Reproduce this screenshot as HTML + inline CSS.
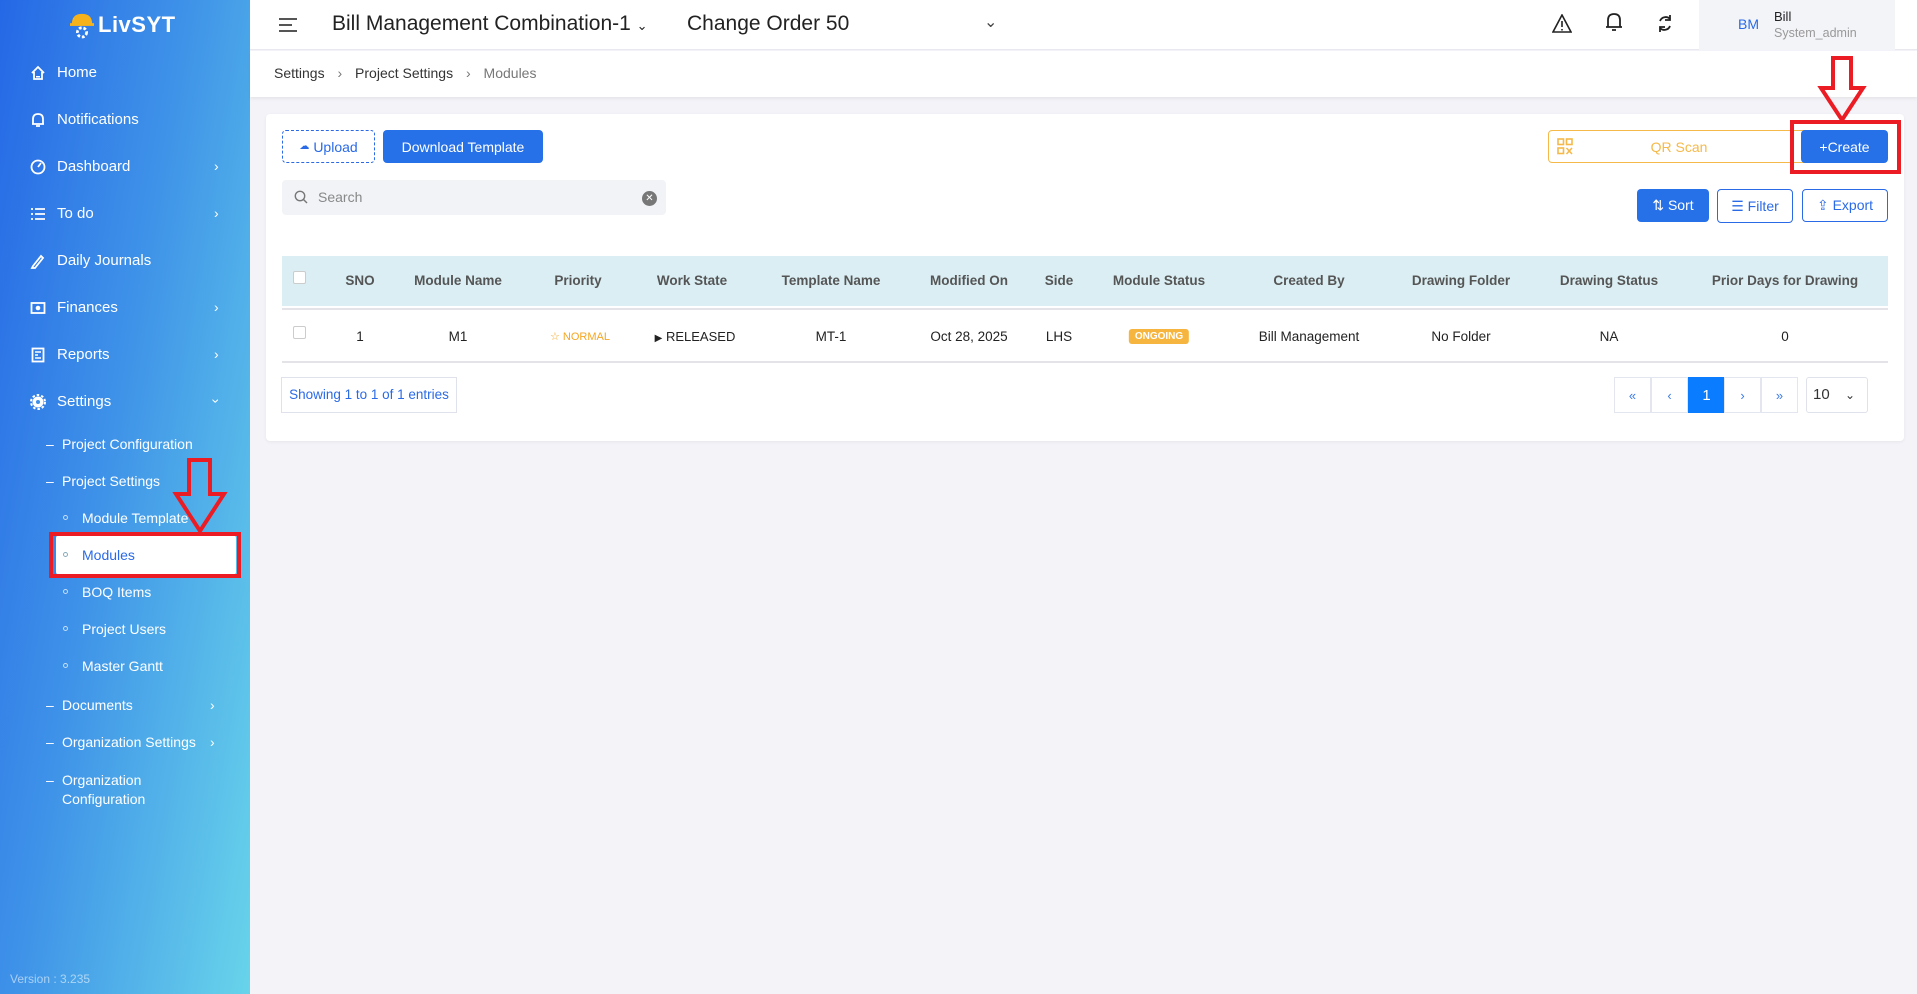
<!DOCTYPE html>
<html><head><meta charset="utf-8">
<style>
*{box-sizing:border-box;margin:0;padding:0}
body{width:1917px;height:994px;overflow:hidden;font-family:"Liberation Sans",sans-serif;background:#f3f3f8;position:relative;color:#333}
.abs{position:absolute}
#side{left:0;top:0;width:250px;height:994px;background:linear-gradient(100deg,#2568e6 0%,#3f93e8 45%,#68d4ea 100%)}
.nav{position:absolute;left:0;color:#fff;font-size:15px;width:250px;height:20px}
.nav svg{position:absolute;left:30px;top:1px}
.nav span{position:absolute;left:57px;top:0}
.nav .chev{position:absolute;left:214px;font-size:14px}
.sub{position:absolute;color:#fff;font-size:14px}
.sub .d{position:absolute;left:-16px;top:0}
.sub .o{position:absolute;left:-19px;top:5px;width:5px;height:5px;border:1px solid rgba(255,255,255,.7);border-radius:50%}
#hdr{left:250px;top:0;width:1667px;height:50px;background:#fff;border-bottom:1px solid #e8e8ee}
#bc{left:250px;top:51px;width:1667px;height:46px;background:#fff;box-shadow:0 2px 3px rgba(0,0,0,.06)}
#card{left:266px;top:114px;width:1638px;height:327px;background:#fff;border-radius:4px;box-shadow:0 1px 3px rgba(0,0,0,.06)}
.btn{position:absolute;border-radius:4px;font-size:14px;display:flex;align-items:center;justify-content:center}
.th,.td{position:absolute;font-size:13.5px;transform:translateX(-50%);white-space:nowrap}
.th{top:273px;font-weight:bold;color:#555}
.td{top:329px;color:#222}
.pg{position:absolute;top:377px;width:37px;height:36px;border:1px solid #e3e6ee;display:flex;align-items:center;justify-content:center;color:#3a7ae8;font-size:13px;background:#fff}
.red{position:absolute;border:4px solid #ec1c24}
</style></head><body>
<div id="side" class="abs"></div>
<svg class="abs" style="left:70px;top:11px" width="24" height="28" viewBox="0 0 26 30"><path d="M2 14 Q2 3 13 3 Q24 3 24 14 Z" fill="#f6b21a"/><rect x="0" y="13" width="26" height="3" fill="#f6b21a"/><circle cx="13" cy="23" r="5" fill="none" stroke="#fff" stroke-width="3" stroke-dasharray="3 2"/></svg>
<div class="abs" style="left:98px;top:12px;color:#fff;font-size:22px;font-weight:bold;letter-spacing:0.5px">LivSYT</div>

<div class="nav" style="top:64px"><svg width="16" height="16" viewBox="0 0 16 16"><path d="M2 8 L8 2 L14 8 M4 7 V14 H12 V7" fill="none" stroke="#fff" stroke-width="1.8"/><rect x="6" y="11" width="4" height="1.5" fill="#fff"/></svg><span>Home</span></div>
<div class="nav" style="top:111px"><svg width="16" height="17" viewBox="0 0 16 17"><path d="M3 12 V7 Q3 2 8 2 Q13 2 13 7 V12 H2 H14 M6 14 H10" fill="none" stroke="#fff" stroke-width="1.8"/></svg><span>Notifications</span></div>
<div class="nav" style="top:158px"><svg width="16" height="16" viewBox="0 0 16 16"><circle cx="8" cy="8" r="6.5" fill="none" stroke="#fff" stroke-width="1.8"/><path d="M8 8 L11 4" stroke="#fff" stroke-width="1.8"/></svg><span>Dashboard</span><span class="chev">›</span></div>
<div class="nav" style="top:205px"><svg width="16" height="16" viewBox="0 0 16 16"><path d="M1 3H3M5 3H15M1 8H3M5 8H15M1 13H3M5 13H15" stroke="#fff" stroke-width="1.8"/></svg><span>To do</span><span class="chev">›</span></div>
<div class="nav" style="top:252px"><svg width="16" height="16" viewBox="0 0 16 16"><path d="M3 13 L11 3 L13 5 L5 15 L2 15 Z" fill="none" stroke="#fff" stroke-width="1.8"/></svg><span>Daily Journals</span></div>
<div class="nav" style="top:299px"><svg width="16" height="16" viewBox="0 0 16 16"><rect x="1.5" y="3" width="13" height="10" fill="none" stroke="#fff" stroke-width="1.8"/><circle cx="8" cy="8" r="2.3" fill="#fff"/></svg><span>Finances</span><span class="chev">›</span></div>
<div class="nav" style="top:346px"><svg width="16" height="16" viewBox="0 0 16 16"><rect x="2.5" y="1.5" width="11" height="13" fill="none" stroke="#fff" stroke-width="1.8"/><path d="M5 5H11M5 8H8M5 11H11" stroke="#fff" stroke-width="1.5"/></svg><span>Reports</span><span class="chev">›</span></div>
<div class="nav" style="top:393px"><svg width="16" height="16" viewBox="0 0 16 16"><circle cx="8" cy="8" r="5.5" fill="#fff"/><circle cx="8" cy="8" r="7" fill="none" stroke="#fff" stroke-width="2" stroke-dasharray="2.5 2"/><circle cx="8" cy="8" r="2" fill="#3d8fe8"/></svg><span>Settings</span><span class="chev" style="transform:rotate(90deg)">›</span></div>

<div class="sub" style="left:62px;top:436px"><span class="d">–</span>Project Configuration</div>
<div class="sub" style="left:62px;top:473px"><span class="d">–</span>Project Settings</div>
<div class="sub" style="left:82px;top:510px"><span class="o"></span>Module Template</div>
<div class="abs" style="left:56px;top:535px;width:180px;height:40px;background:#fff;border-radius:3px"></div>
<div class="sub" style="left:82px;top:547px;color:#2a6ae6"><span class="o" style="border-color:#8ab"></span>Modules</div>
<div class="sub" style="left:82px;top:584px"><span class="o"></span>BOQ Items</div>
<div class="sub" style="left:82px;top:621px"><span class="o"></span>Project Users</div>
<div class="sub" style="left:82px;top:658px"><span class="o"></span>Master Gantt</div>
<div class="sub" style="left:62px;top:697px"><span class="d">–</span>Documents<span style="position:absolute;left:148px">›</span></div>
<div class="sub" style="left:62px;top:734px"><span class="d">–</span>Organization Settings<span style="position:absolute;left:148px">›</span></div>
<div class="sub" style="left:62px;top:771px;line-height:19px"><span class="d">–</span>Organization<br>Configuration</div>
<div class="abs" style="left:10px;top:972px;color:rgba(255,255,255,.55);font-size:12px">Version : 3.235</div>

<div class="red" style="left:49px;top:532px;width:192px;height:46px"></div>
<svg class="abs" style="left:172px;top:457px" width="56" height="78" viewBox="0 0 56 78"><path d="M17 3 H38 V37 H52 L28 74 L4 37 H17 Z" fill="none" stroke="#ec1c24" stroke-width="4"/></svg>

<div id="hdr" class="abs">
<svg class="abs" style="left:29px;top:17px" width="20" height="16"><path d="M0 2H18M0 8H13M0 14H18" stroke="#555" stroke-width="2"/></svg>
<div class="abs" style="left:82px;top:12px;font-size:21px;color:#222">Bill Management Combination-1 <span style="font-size:13px">⌄</span></div>
<div class="abs" style="left:437px;top:12px;font-size:21px;color:#222">Change Order 50</div>
<div class="abs" style="left:734px;top:12px;font-size:16px;color:#444">⌄</div>
<svg class="abs" style="left:1302px;top:14px" width="20" height="19"><path d="M10 1 L19 18 H1 Z" fill="none" stroke="#222" stroke-width="1.6"/><path d="M10 7V13M10 15V16.5" stroke="#222" stroke-width="1.6"/></svg>
<svg class="abs" style="left:1355px;top:12px" width="18" height="20"><path d="M3 15 V8 Q3 2 9 2 Q15 2 15 8 V15 H1 H17 M7 18 H11" fill="none" stroke="#222" stroke-width="1.8"/></svg>
<svg class="abs" style="left:1406px;top:14px" width="18" height="19"><path d="M14 5 A6 6 0 0 0 4 7 M4 14 A6 6 0 0 0 14 12" fill="none" stroke="#222" stroke-width="1.8"/><path d="M14 1V6H9M4 18V13H9" fill="none" stroke="#222" stroke-width="1.8"/></svg>
<div class="abs" style="left:1449px;top:0;width:196px;height:50px;background:#f3f4f8"></div>
<div class="abs" style="left:1488px;top:16px;font-size:14px;color:#2a6ae6">BM</div>
<div class="abs" style="left:1524px;top:9px;font-size:13px;color:#222">Bill</div>
<div class="abs" style="left:1524px;top:26px;font-size:12.5px;color:#999">System_admin</div>
</div>

<div id="bc" class="abs">
<div class="abs" style="left:24px;top:14px;font-size:14px;color:#333">Settings <span style="margin:0 9px;color:#777">›</span> Project Settings <span style="margin:0 9px;color:#777">›</span> <span style="color:#777">Modules</span></div>
</div>

<div id="card" class="abs"></div>
<div class="btn" style="left:282px;top:130px;width:93px;height:33px;border:1px dashed #2a6ae6;color:#2a6ae6"><span style="font-size:10px;margin-right:4px">☁</span>Upload</div>
<div class="btn" style="left:383px;top:130px;width:160px;height:33px;background:#2670e8;color:#fff">Download Template</div>
<div class="abs" style="left:282px;top:180px;width:384px;height:35px;background:#f1f3f7;border-radius:4px"></div>
<svg class="abs" style="left:294px;top:190px" width="14" height="15"><circle cx="6" cy="6" r="4.7" fill="none" stroke="#777" stroke-width="1.4"/><path d="M9.5 9.5L13 13" stroke="#777" stroke-width="1.4"/></svg>
<div class="abs" style="left:318px;top:189px;font-size:14px;color:#888">Search</div>
<div class="abs" style="left:642px;top:191px;width:15px;height:15px;border-radius:50%;background:#777;color:#fff;font-size:10px;text-align:center;line-height:15px">✕</div>

<div class="btn" style="left:1548px;top:130px;width:262px;height:33px;border:1px solid #f5b94a;color:#f5b94a;font-size:14px">QR Scan</div>
<svg class="abs" style="left:1557px;top:138px" width="16" height="17"><g fill="none" stroke="#f5b94a" stroke-width="1.6"><rect x="1" y="1" width="5.5" height="5.5"/><rect x="9.5" y="1" width="5.5" height="5.5"/><rect x="1" y="10" width="5.5" height="5.5"/><path d="M9.5 10L15 16M15 10L9.5 16"/></g></svg>
<div class="btn" style="left:1801px;top:130px;width:87px;height:33px;background:#2670e8;color:#fff">+Create</div>
<div class="red" style="left:1790px;top:120px;width:111px;height:54px"></div>
<svg class="abs" style="left:1816px;top:56px" width="56" height="68" viewBox="0 0 56 68"><path d="M17 2 H35 V32 H47 L26 64 L5 32 H17 Z" fill="none" stroke="#ec1c24" stroke-width="4"/></svg>

<div class="btn" style="left:1637px;top:189px;width:72px;height:33px;background:#2670e8;color:#fff">⇅ Sort</div>
<div class="btn" style="left:1717px;top:189px;width:76px;height:34px;border:1px solid #2a6ae6;color:#2a6ae6">☰ Filter</div>
<div class="btn" style="left:1802px;top:189px;width:86px;height:33px;border:1px solid #2a6ae6;color:#2a6ae6">⇪ Export</div>

<div class="abs" style="left:282px;top:256px;width:1606px;height:50px;background:#daeef3"></div>
<div class="abs" style="left:282px;top:308px;width:1606px;height:2px;background:#e4e4e8"></div>
<div class="abs" style="left:282px;top:361px;width:1606px;height:2px;background:#e4e4e8"></div>
<div class="abs" style="left:293px;top:271px;width:13px;height:13px;border:1px solid #ccc;border-radius:2px;background:#fff"></div>
<div class="abs" style="left:293px;top:326px;width:13px;height:13px;border:1px solid #ccc;border-radius:2px;background:#fff"></div>
<div class="th" style="left:360px">SNO</div>
<div class="th" style="left:458px">Module Name</div>
<div class="th" style="left:578px">Priority</div>
<div class="th" style="left:692px">Work State</div>
<div class="th" style="left:831px">Template Name</div>
<div class="th" style="left:969px">Modified On</div>
<div class="th" style="left:1059px">Side</div>
<div class="th" style="left:1159px">Module Status</div>
<div class="th" style="left:1309px">Created By</div>
<div class="th" style="left:1461px">Drawing Folder</div>
<div class="th" style="left:1609px">Drawing Status</div>
<div class="th" style="left:1785px">Prior Days for Drawing</div>

<div class="td" style="left:360px">1</div>
<div class="td" style="left:458px">M1</div>
<div class="td" style="left:580px;color:#f5a623;font-size:11px;top:330px">☆ NORMAL</div>
<div class="td" style="left:695px;font-size:13px"><span style="font-size:10px">▶</span> RELEASED</div>
<div class="td" style="left:831px">MT-1</div>
<div class="td" style="left:969px">Oct 28, 2025</div>
<div class="td" style="left:1059px">LHS</div>
<div class="td" style="left:1159px;top:329px;background:#f6b53f;color:#fff;font-size:10px;font-weight:bold;padding:2px 6px;border-radius:3px">ONGOING</div>
<div class="td" style="left:1309px">Bill Management</div>
<div class="td" style="left:1461px">No Folder</div>
<div class="td" style="left:1609px">NA</div>
<div class="td" style="left:1785px">0</div>

<div class="abs" style="left:281px;top:377px;width:176px;height:36px;border:1px solid #dfe2ea;color:#2a6ae6;font-size:13.5px;line-height:34px;text-align:center">Showing 1 to 1 of 1 entries</div>
<div class="pg" style="left:1614px">«</div>
<div class="pg" style="left:1651px">‹</div>
<div class="pg" style="left:1688px;background:#0a7cff;color:#fff;border-color:#0a7cff;font-size:15px">1</div>
<div class="pg" style="left:1724px">›</div>
<div class="pg" style="left:1761px">»</div>
<div class="abs" style="left:1806px;top:377px;width:62px;height:36px;border:1px solid #dfe2ea;border-radius:3px;font-size:15px;line-height:34px;padding-left:6px;color:#333">10 <span style="position:absolute;right:12px;font-size:12px">⌄</span></div>
</body></html>
